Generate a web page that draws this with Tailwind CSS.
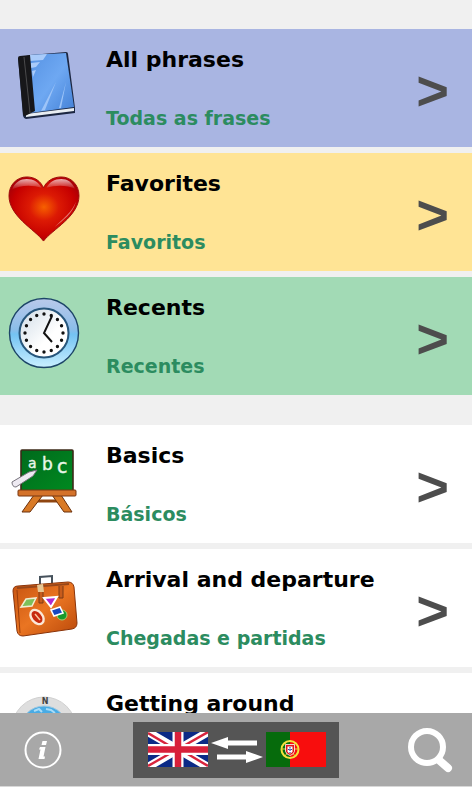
<!DOCTYPE html>
<html lang="en">
<head>
    <meta charset="UTF-8">
    <meta name="viewport" content="width=device-width, initial-scale=1.0">
    <title>Phrasebook</title>
    <script src="https://cdn.jsdelivr.net/npm/@tailwindcss/browser@4"></script>
</head>
<body class="flex flex-col h-screen bg-[#f0f0f0] font-['Verdana','DejaVu_Sans',sans-serif] font-bold text-black">

    <!-- Category list -->
    <main class="flex-1 min-h-0 overflow-y-auto [scrollbar-width:none] pt-[29px]">
        <nav class="flex flex-col gap-[6px]">
            <a href="#all" class="flex h-[118px] pl-2 pr-[23px] bg-[#a9b5e2]">
                <svg class="size-[72px] mt-5 shrink-0" viewBox="0 0 72 72">
                    <defs>
                        <linearGradient id="cover" x1="0" y1="0" x2="1" y2="1">
                            <stop offset="0" stop-color="#5793e4"/>
                            <stop offset=".5" stop-color="#6ea8f2"/>
                            <stop offset="1" stop-color="#4380d6"/>
                        </linearGradient>
                    </defs>
                    <path d="M10 9l12-3 36-3q2 0 2 2l7 54v5L18 70q-2 0-3-3z" fill="#1c2742"/>
                    <path d="M18 65l48-6v3l-48 6z" fill="#e8edf2"/>
                    <path d="M22 6l36-2 8 54-44 6z" fill="url(#cover)"/>
                    <path d="M22 6l17-1-4 6-13 1zM23 14l9-1-4 5-5 1zM24 22l4-1-3 7z" fill="#a9cbfa"/>
                    <path d="M33 62l15-29-11 28zM51 59l7-26-5 26z" fill="#9dc4f8"/>
                    <path d="M10 9q0-2 2-2l10-1 5 56-10 5q-2 0-2-3z" fill="#17171a"/>
                    <path d="M16 8l6 56" stroke="#4a4a4c" stroke-width="1"/>
                </svg>
                <span class="flex-1 grid grid-rows-2 items-center pl-[26px] pt-px whitespace-nowrap">
                    <span class="text-[22px]">All phrases</span>
                    <span class="text-[19px] text-[#2c8c60]">Todas as frases</span>
                </span>
                <span class="self-center pt-[6px] font-['Liberation_Sans',sans-serif] text-[56px] leading-none text-[#4d4d4d]">&gt;</span>
            </a>

            <a href="#favorites" class="flex h-[118px] pl-2 pr-[23px] bg-[#ffe495]">
                <svg class="size-[72px] mt-5 shrink-0" viewBox="0 0 73 73">
                    <defs>
                        <radialGradient id="heart" cx=".5" cy=".47" r=".6">
                            <stop offset="0" stop-color="#f76000"/>
                            <stop offset=".35" stop-color="#dc1a04"/>
                            <stop offset=".75" stop-color="#c60000"/>
                            <stop offset="1" stop-color="#a00008"/>
                        </radialGradient>
                        <linearGradient id="shine" x1="0" y1="0" x2="0" y2="1">
                            <stop offset="0" stop-color="#fff" stop-opacity=".7"/>
                            <stop offset="1" stop-color="#fff" stop-opacity="0"/>
                        </linearGradient>
                    </defs>
                    <path d="M36 69C27 57 1 44 1 23 1 12 9 4 19 4c8 0 14 4 17 11C39 8 46 4 54 4c10 0 18 8 18 19 0 21-27 34-36 46z" fill="url(#heart)" stroke="#9c0c0c" stroke-width="1"/>
                    <path d="M4 17C7 9 13 6 19 6c7 0 12 3 15 9-9-3-22-3-30 2zM39 15c3-6 8-9 15-9 6 0 11 3 14 10-8-4-20-4-29-1z" fill="url(#shine)"/>
                    <path d="M69 29C66 41 56 48 47 55c9-9 18-15 22-26z" fill="#fff" opacity=".45"/>
                </svg>
                <span class="flex-1 grid grid-rows-2 items-center pl-[26px] pt-px whitespace-nowrap">
                    <span class="text-[22px]">Favorites</span>
                    <span class="text-[19px] text-[#2c8c60]">Favoritos</span>
                </span>
                <span class="self-center pt-[6px] font-['Liberation_Sans',sans-serif] text-[56px] leading-none text-[#4d4d4d]">&gt;</span>
            </a>

            <a href="#recents" class="flex h-[118px] pl-2 pr-[23px] bg-[#a2dab5]">
                <svg class="size-[72px] mt-5 shrink-0" viewBox="0 0 72 72">
                    <defs>
                        <linearGradient id="rim" x1="0" y1="0" x2="0" y2="1">
                            <stop offset="0" stop-color="#b9c9ea"/>
                            <stop offset=".45" stop-color="#8bbde9"/>
                            <stop offset=".52" stop-color="#74c3f3"/>
                            <stop offset="1" stop-color="#c9efff"/>
                        </linearGradient>
                        <linearGradient id="dial" x1="0" y1="0" x2="1" y2="1">
                            <stop offset="0" stop-color="#cfdbe6"/>
                            <stop offset=".6" stop-color="#fff"/>
                        </linearGradient>
                    </defs>
                    <circle cx="36" cy="36" r="34.5" fill="url(#rim)" stroke="#1d4568" stroke-width="1.4"/>
                    <circle cx="36" cy="36" r="24.5" fill="url(#dial)" stroke="#27567c" stroke-width="2"/>
                    <circle cx="36" cy="36" r="19" fill="none" stroke="#111" stroke-width="3.4" stroke-linecap="round" stroke-dasharray="0 16" pathLength="256"/>
                    <path d="M44 19l-8 17 8 9" fill="none" stroke="#111" stroke-width="2"/>
                </svg>
                <span class="flex-1 grid grid-rows-2 items-center pl-[26px] pt-px whitespace-nowrap">
                    <span class="text-[22px]">Recents</span>
                    <span class="text-[19px] text-[#2c8c60]">Recentes</span>
                </span>
                <span class="self-center pt-[6px] font-['Liberation_Sans',sans-serif] text-[56px] leading-none text-[#4d4d4d]">&gt;</span>
            </a>

            <a href="#basics" class="flex h-[118px] mt-6 pl-2 pr-[23px] bg-white">
                <svg class="size-[72px] mt-5 shrink-0" viewBox="0 0 72 72">
                    <defs>
                        <linearGradient id="board" x1="0" y1="0" x2="1" y2="1">
                            <stop offset="0" stop-color="#006a1c"/>
                            <stop offset="1" stop-color="#008a20"/>
                        </linearGradient>
                    </defs>
                    <path d="M25 56h28" stroke="#8f4510" stroke-width="3"/>
                    <path d="M26 50h9L22 67h-8zM44 50h9l11 17h-8z" fill="#d97a26" stroke="#6b300c" stroke-width="1"/>
                    <rect x="13" y="5" width="52" height="41" rx="1" fill="url(#board)" stroke="#3c2a18" stroke-width="1.6"/>
                    <rect x="10" y="45" width="58" height="6" rx="1" fill="#d4722a" stroke="#793610" stroke-width="1"/>
                    <g fill="#e9f7e9" font-family="DejaVu Sans, sans-serif" font-weight="400" stroke="#e9f7e9" stroke-width=".4">
                        <text x="20" y="23" font-size="14">a</text>
                        <text x="34" y="25" font-size="17">b</text>
                        <text x="49" y="28" font-size="19">c</text>
                    </g>
                    <path d="M4 37l17-10 8-2-4 6-17 11q-4 0-4-5z" fill="#eeeaf2" stroke="#77737c" stroke-width="1"/>
                </svg>
                <span class="flex-1 grid grid-rows-2 items-center pl-[26px] pt-px whitespace-nowrap">
                    <span class="text-[22px]">Basics</span>
                    <span class="text-[19px] text-[#2c8c60]">Básicos</span>
                </span>
                <span class="self-center pt-[6px] font-['Liberation_Sans',sans-serif] text-[56px] leading-none text-[#4d4d4d]">&gt;</span>
            </a>

            <a href="#arrival" class="flex h-[118px] pl-2 pr-[23px] bg-white">
                <svg class="size-[72px] mt-5 shrink-0" viewBox="0 0 72 72">
                    <defs>
                        <linearGradient id="leather" x1="0" y1="0" x2="1" y2="1">
                            <stop offset="0" stop-color="#c65310"/>
                            <stop offset=".5" stop-color="#ea7522"/>
                            <stop offset="1" stop-color="#b9480a"/>
                        </linearGradient>
                    </defs>
                    <path d="M32 15V8l12-1v8" fill="none" stroke="#46525c" stroke-width="2"/>
                    <path d="M5 22q0-5 5-5l50-4q5 0 6 5l3 36q0 5-5 6l-49 7q-5 0-6-5z" fill="url(#leather)" stroke="#8a340a" stroke-width="1"/>
                    <path d="M9 21l3 43" stroke="#9b3c0a" stroke-width="1"/>
                    <path d="M9 19l52-4" stroke="#97471a" stroke-width="2"/>
                    <path d="M29 16l6-1 1 8h-6z" fill="#e7c692"/>
                    <path d="M31 23v11h4V23M51 17v12h4V17" fill="#c75c1c" stroke="#7c3a14" stroke-width="1"/>
                    <path d="M18 30l10-1-4 8-11 1z" fill="#7cc05a" stroke="#f2ecd2" stroke-width="1.5"/>
                    <path d="M36 29l13-1-6 10z" fill="#b02ad0" stroke="#fff" stroke-width="2"/>
                    <ellipse cx="29" cy="48" rx="5.5" ry="8" transform="rotate(-40 29 48)" fill="#c72a10" stroke="#fbe8d8" stroke-width="2.4"/>
                    <path d="M27 45l5 6" stroke="#fbc9a0" stroke-width="1.4"/>
                    <circle cx="54" cy="46" r="5" fill="#189a2c" stroke="#a4cf6e" stroke-width="1"/>
                    <path d="M43 41l9-3 3 6-9 3z" fill="#1648c0" stroke="#fff" stroke-width="1.6"/>
                </svg>
                <span class="flex-1 grid grid-rows-2 items-center pl-[26px] pt-px whitespace-nowrap">
                    <span class="text-[22px]">Arrival and departure</span>
                    <span class="text-[19px] text-[#2c8c60]">Chegadas e partidas</span>
                </span>
                <span class="self-center pt-[6px] font-['Liberation_Sans',sans-serif] text-[56px] leading-none text-[#4d4d4d]">&gt;</span>
            </a>

            <a href="#around" class="flex h-[118px] pl-2 pr-[23px] bg-white">
                <svg class="size-[72px] mt-5 shrink-0" viewBox="0 0 72 72">
                    <circle cx="36" cy="36" r="32" fill="#dedede" stroke="#d0d0d0" stroke-width="1"/>
                    <circle cx="36" cy="37" r="24" fill="#48abe4" stroke="#9fc8e0" stroke-width="1"/>
                    <path d="M26 18l5-2 3 3M38 16l5 1 4 3" fill="none" stroke="#a8dcf8" stroke-width="2"/>
                    <text x="37" y="11" font-size="8" text-anchor="middle" fill="#444">N</text>
                </svg>
                <span class="flex-1 grid grid-rows-2 items-center pl-[26px] pt-px whitespace-nowrap">
                    <span class="text-[22px]">Getting around</span>
                </span>
            </a>
        </nav>
    </main>

    <!-- Bottom toolbar -->
    <footer class="shrink-0 flex items-center justify-between h-[74px] pl-6 pr-[18px] bg-[#a8a8a8] border-b border-[#d8d8d8]">
        <button type="button" aria-label="Information" class="w-10">
            <svg class="size-[38px]" viewBox="0 0 38 38">
                <circle cx="19" cy="19" r="17.5" fill="none" stroke="#fff" stroke-width="2"/>
                <path d="M18.500 10h4.500l-1 4h-4.500zM16 16h5.500l-2 9.500h1.500l-.5 2.500h-6l2-9.500h-1.500z" fill="#fff"/>
            </svg>
        </button>

        <!-- Language switch -->
        <button type="button" aria-label="Swap languages" class="flex items-center justify-center gap-[3px] w-[206px] h-14 pl-[2px] bg-[#555]">
            <svg class="w-[60px] h-[35px]" viewBox="0 0 60 35">
                <path d="M0 0h60v35H0z" fill="#0b2a86"/>
                <path d="M0 0l60 35M60 0L0 35" stroke="#fff" stroke-width="8"/>
                <path d="M0 1l27 16M33 18l27 16M60 0L32 16M28 18L0 34" stroke="#d8243c" stroke-width="2.400"/>
                <path d="M30 0v35M0 17.500h60" stroke="#fff" stroke-width="11"/>
                <path d="M30 0v35M0 17.500h60" stroke="#d8203a" stroke-width="6.500"/>
            </svg>
            <svg class="w-[52px] h-[28px]" viewBox="0 0 52 28" fill="#fff">
                <path d="M0 7l17-6v3.500h29v5H17V13zM52 21l-17 6v-3.500H6v-5h29V15z"/>
            </svg>
            <svg class="w-[60px] h-[35px]" viewBox="0 0 60 35">
                <path d="M0 0h60v35H0z" fill="#f80d0d"/>
                <path d="M0 0h24v35H0z" fill="#066b0c"/>
                <circle cx="24" cy="17.500" r="8.500" fill="none" stroke="#f2e23c" stroke-width="2"/>
                <path d="M15 17h18M19 11l10 13M29 11L19 24" stroke="#e8d434" stroke-width="1"/>
                <path d="M19.500 12.500h9v7q-1 3-4.500 4-3.500-1-4.500-4z" fill="#e01818" stroke="#fff" stroke-width=".8"/>
                <path d="M21.500 14.500h5v5q-1 2-2.500 2t-2.500-2z" fill="#fff"/>
                <path d="M24 15v6M22 17.500h4" stroke="#2a4ca8" stroke-width="1.200" stroke-dasharray="1.500 1"/>
            </svg>
        </button>

        <button type="button" aria-label="Search">
            <svg class="size-[46px]" viewBox="0 0 46 46" fill="none" stroke="#fff">
                <circle cx="19" cy="20" r="16" stroke-width="6"/>
                <path d="M32 34l8 7" stroke-width="8" stroke-linecap="round"/>
            </svg>
        </button>
    </footer>
</body>
</html>
